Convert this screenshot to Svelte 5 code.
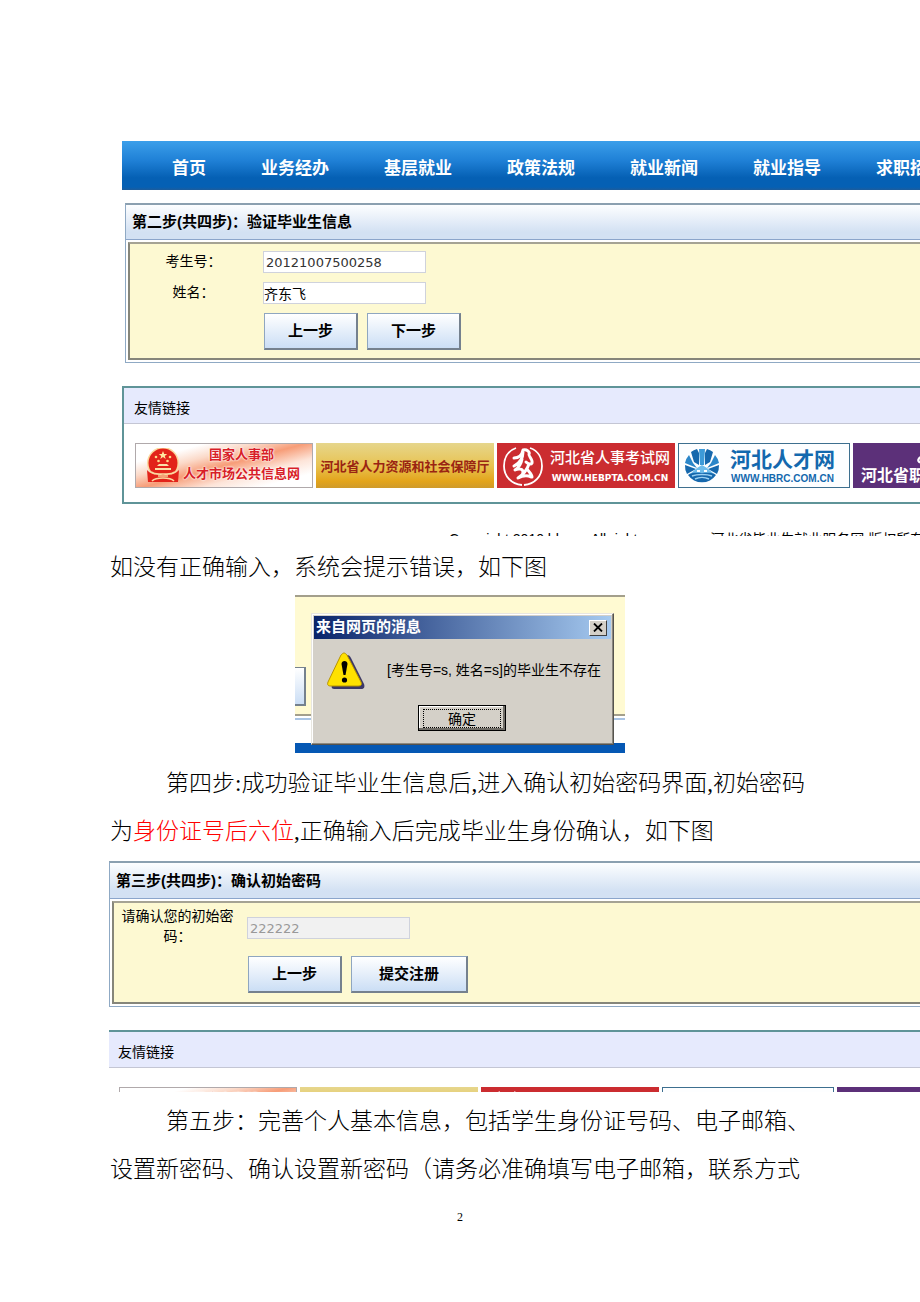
<script>
  const navItems = ['首页', '业务经办', '基层就业', '政策法规', '就业新闻', '就业指导', '求职招聘'];
</script>

{#snippet friendLinks()}
  <section class="links">
    <h2>友情链接</h2>
    <div class="banners">
      <a class="banner market" href="#market">
        <svg class="emblem" viewBox="0 0 34 36" aria-hidden="true">
          <circle cx="17" cy="15" r="16" fill="#fbd9a0" />
          <circle cx="17" cy="15" r="14.500" fill="#e2231a" />
          <path d="M17 3l1.200 3h3l-2.400 1.900.9 3L17 9.100l-2.700 1.800.9-3L12.800 6h3z" fill="#ffe7a0" />
          <g fill="#ffd98a">
            <circle cx="10" cy="9" r="1.300" /><circle cx="24" cy="9" r="1.300" />
            <circle cx="12.500" cy="13" r="1.300" /><circle cx="21.500" cy="13" r="1.300" />
          </g>
          <path d="M11 18l2-2h8l2 2zM9 20h16v2H9z" fill="#fbe0a8" />
          <path d="M1 22c3 4 9 5 16 5s13-1 16-5l-1 12H2z" fill="#e2231a" />
          <path d="M5 24c4 3 8 2 12 2s8 1 12-2M6 33c3-3 7-3 11-3s8 0 11 3" fill="none" stroke="#fbd9a0" stroke-width="1.600" />
          <path d="M12 28h10" stroke="#fbd9a0" stroke-width="1.400" />
        </svg>
        <span class="stack"><span>国家人事部</span><span>人才市场公共信息网</span></span>
      </a>
      <a class="banner bureau" href="#bureau">河北省人力资源和社会保障厅</a>
      <a class="banner exam" href="#exam">
        <svg class="seal" viewBox="0 0 42 42" aria-hidden="true">
          <path d="M14 3C5 6 2 14 2 21c0 10 7 18 18 19M28 3c9 3 12 11 12 18 0 10-7 18-18 19" fill="none" stroke="#fff" stroke-width="1.800" />
          <path d="M12 13c5 0 8-3 9-8 4-1 7 2 6 4-1 2 4 5 3 9-1 2-4 1-6-1M21 7c0 6-3 11-9 14M20 14c-1 6-4 9-7 11 4-2 8-1 8 2s-3 6-5 6M27 19c-2 6-5 10-11 14 4-2 9-3 13-1M25 24c2 3 5 5 5 8" fill="none" stroke="#fff" stroke-width="3" stroke-linecap="round" stroke-linejoin="round" />
        </svg>
        <span class="stack"><span>河北省人事考试网</span><small>WWW.HEBPTA.COM.CN</small></span>
      </a>
      <a class="banner talent" href="#talent">
        <svg class="globe" viewBox="0 0 36 36" aria-hidden="true">
          <path d="M13 1a17 17 0 0 0-6 3l3 10 5 3V5zM23 1a17 17 0 0 1 6 3l-3 10-5 3V5z" fill="#1668ad" />
          <path d="M15 1h6l-1 16h-4z" fill="#3d9ad8" />
          <path d="M5 7a17 17 0 0 0-4 8l12 5-4-5zM31 7a17 17 0 0 1 4 8l-12 5 4-5z" fill="#2b86c9" />
          <path d="M1 17l11 4-9 5a17 17 0 0 1-2-9zM35 17l-11 4 9 5a17 17 0 0 0 2-9z" fill="#1668ad" />
          <path d="M13 20l5-3 5 3 7 6H6z" fill="#6fbdec" />
          <path d="M4 27c4-3 9-2 14-2s10-1 14 2a17 17 0 0 1-28 0z" fill="#1668ad" />
          <path d="M8 28c5-2 15-2 20 0M11 31c4-2 10-2 14 0" fill="none" stroke="#9bd0f2" stroke-width="1.400" />
          <path d="M13 23h3M20 23h3" stroke="#fff" stroke-width="2" />
        </svg>
        <span class="stack"><span>河北人才网</span><small>WWW.HBRC.COM.CN</small></span>
      </a>
      <a class="banner vocational" href="#vocational">
        <svg class="swash" viewBox="0 0 40 16" aria-hidden="true">
          <path d="M8 4C4 5 2 8 4 10c3 2 8-1 12-5s12-4 18-1" fill="none" stroke="#fff" stroke-width="2.500" />
        </svg>
        <span>河北省职业技能</span>
      </a>
    </div>
  </section>
{/snippet}

<main>
  <figure class="shot first">
    <nav>
      {#each navItems as item}
        <a href="#{item}">{item}</a>
      {/each}
    </nav>
    <form class="panel" onsubmit={(e) => e.preventDefault()}>
      <h2>第二步(共四步)：验证毕业生信息</h2>
      <div class="fields">
        <div class="row">
          <label for="exam-no">考生号：</label>
          <input id="exam-no" type="text" value="20121007500258" />
        </div>
        <div class="row">
          <label for="full-name">姓名：</label>
          <input id="full-name" class="cjk" type="text" value="齐东飞" />
        </div>
        <div class="actions">
          <button type="button">上一步</button>
          <button type="submit">下一步</button>
        </div>
      </div>
    </form>
    {@render friendLinks()}
    <div class="copyright">
      <span>Copyright 2010 hbxsw All rights</span>
      <span>河北省毕业生就业服务网 版权所有</span>
    </div>
  </figure>

  <p>如没有正确输入，系统会提示错误，如下图</p>

  <figure class="shot alert">
    <div class="sheet"><i></i></div>
    <div class="floor"></div>
    <div class="dialog" role="alertdialog" aria-labelledby="dlg-title" aria-describedby="dlg-text">
      <header>
        <strong id="dlg-title">来自网页的消息</strong>
        <button class="close" type="button" aria-label="关闭">
          <svg viewBox="0 0 10 9" aria-hidden="true"><path d="M1 .5l8 8M9 .5l-8 8" stroke="#000" stroke-width="1.800" /></svg>
        </button>
      </header>
      <div class="message">
        <svg viewBox="0 0 38 38" aria-hidden="true">
          <path d="M20 3c2 0 3 1 4 3l13 26c1 3 0 5-3 5H8c-3 0-4-1-3-4L17 5z" fill="#3b3766" />
          <path d="M17 1c1 0 2 1 3 2l14 27c1 3 0 4-3 4H4c-3 0-4-1-3-4L14 3c1-1 2-2 3-2z" fill="#ffe100" stroke="#b89400" />
          <path d="M14.500 12c0-4 6-4 6 0l-2 11h-2z" fill="#000" />
          <circle cx="17.500" cy="28" r="2.600" fill="#000" />
        </svg>
        <span id="dlg-text">[考生号=s, 姓名=s]的毕业生不存在</span>
      </div>
      <button class="ok" type="button"><span>确定</span></button>
    </div>
  </figure>

  <p class="indent">第四步:成功验证毕业生信息后,进入确认初始密码界面,初始密码<br />为<em>身份证号后六位</em>,正确输入后完成毕业生身份确认，如下图</p>

  <figure class="shot third">
    <form class="panel" onsubmit={(e) => e.preventDefault()}>
      <h2>第三步(共四步)：确认初始密码</h2>
      <div class="fields">
        <div class="row">
          <label for="first-pass">请确认您的初始密码：</label>
          <input id="first-pass" type="text" value="222222" disabled />
        </div>
        <div class="actions">
          <button type="button">上一步</button>
          <button class="wide" type="submit">提交注册</button>
        </div>
      </div>
    </form>
    {@render friendLinks()}
  </figure>

  <p class="indent">第五步：完善个人基本信息，包括学生身份证号码、电子邮箱、<br />设置新密码、确认设置新密码（请务必准确填写电子邮箱，联系方式</p>

  <footer>2</footer>
</main>

<style>
  :global(body) {
    background: #fff;
  }
  main {
    padding: 141px 0 76px 110px;
    overflow: hidden;
    color: #000;
    font-family: "Liberation Serif", "Noto Sans CJK SC", serif;
  }
  main :global(*) {
    box-sizing: border-box;
  }
  a {
    color: inherit;
    text-decoration: none;
    white-space: nowrap;
  }
  p {
    margin: 0;
    font-size: 23px;
    line-height: 48px;
    font-weight: 300;
    white-space: nowrap;
  }
  p.indent {
    text-indent: 56px;
  }
  em {
    color: #f00;
    font-style: normal;
  }
  .shot {
    overflow: hidden;
    font-family: "Liberation Sans", "Noto Sans CJK SC", sans-serif;
    font-size: 14px;
  }
  .first {
    height: 395px;
    margin: 0 0 8px 12px;
  }
  nav {
    display: flex;
    gap: 55px;
    height: 49px;
    padding: 2px 0 0 50px;
    line-height: 51px;
    color: #fff;
    font-size: 17px;
    font-weight: 700;
    background: linear-gradient(#3b9fea, #1f80d6 40%, #0560b4 75%, #0560b4 94%, #1d5c9c);
  }

  /* framed form */
  .panel {
    border: 1px solid #8fa9c4;
    border-top: 2px solid #8ba0b0;
    border-right: 0;
  }
  .first .panel {
    margin: 13px 0 0 3px;
  }
  h2 {
    margin: 0;
    font-size: 15px;
  }
  .panel h2 {
    height: 35px;
    padding-left: 6px;
    line-height: 34px;
    border-bottom: 1px solid #8ba5cb;
    background: linear-gradient(#fdfeff, #d3e1f3 80%);
  }
  .fields {
    display: flex;
    flex-direction: column;
    gap: 9px;
    margin: 2px 0 2px 2px;
    padding: 7px 0 8px 7px;
    border: 2px solid #86867a;
    border-top-color: #a5a394;
    border-right: 0;
    background: #fdf9d2;
  }
  .row {
    display: flex;
    align-items: flex-start;
    gap: 13px;
  }
  label {
    width: 113px;
    line-height: 20px;
    text-align: center;
  }
  input {
    width: 163px;
    height: 22px;
    padding: 0 2px;
    border: 1px solid #cfd2dc;
    background: #fff;
    color: #333;
    font: 13px "DejaVu Sans", sans-serif;
  }
  input.cjk {
    padding-left: 0;
    color: #000;
    font: 14px "Noto Sans CJK SC", sans-serif;
  }
  input:disabled {
    background: #f1f1f1;
    color: #999;
  }
  .actions {
    display: flex;
    gap: 9px;
    padding-left: 127px;
  }
  .actions button {
    width: 94px;
    height: 37px;
    padding: 0 0 4px;
    border: solid #75818e;
    border-width: 1px 2px 2px 1px;
    border-top-color: #8fa6c0;
    border-left-color: #8fa6c0;
    background: linear-gradient(#fff, #cbdef5);
    color: #000;
    font: 700 15px "Noto Sans CJK SC", sans-serif;
  }
  .actions .wide {
    width: 117px;
  }

  /* friendly links */
  .links {
    margin-top: 23px;
    border: 2px solid #5f9498;
    border-right: 0;
  }
  .links h2 {
    height: 36px;
    padding-left: 10px;
    line-height: 41px;
    font-size: 14px;
    font-weight: 400;
    border-bottom: 1px solid #c4c6d4;
    background: #e6eafd;
  }
  .banners {
    display: flex;
    gap: 3px;
    padding: 19px 0 14px 11px;
  }
  .banner {
    flex: none;
    display: flex;
    align-items: center;
    width: 178px;
    height: 45px;
    overflow: hidden;
    font-weight: 700;
  }
  .stack {
    display: flex;
    flex-direction: column;
    align-items: center;
  }
  .market {
    padding-left: 10px;
    gap: 3px;
    border: 1px solid #b0a9ab;
    color: #d81e28;
    font-size: 13px;
    line-height: 19px;
    text-shadow: 0 0 2px #fff, 0 0 2px #fff;
    background: linear-gradient(165deg, #fff 0 20%, #fbd9c8 35%, #f79d78 50%, #fde4d8 68%, #fff 85%);
  }
  .market .stack {
    padding-bottom: 3px;
  }
  .emblem {
    width: 34px;
    height: 36px;
  }
  .bureau {
    justify-content: center;
    color: #9a2412;
    font-size: 13px;
    background: linear-gradient(#e6d68c, #e8c352 50%, #e3a41b 85%, #cf9a2a);
  }
  .exam {
    padding-left: 5px;
    gap: 6px;
    color: #fff;
    font-size: 15px;
    line-height: 22px;
    background: #cb2c30;
  }
  .exam .stack {
    padding-top: 3px;
    font-weight: 500;
  }
  .seal {
    width: 42px;
    height: 42px;
  }
  small {
    font-size: 9px;
    line-height: 18px;
    font-family: "DejaVu Sans", sans-serif;
    font-weight: 700;
  }
  .talent {
    width: 172px;
    padding-left: 5px;
    gap: 10px;
    border: 1px solid #3d6f8f;
    color: #1368ae;
    font-size: 21px;
    line-height: 23px;
    background: #fdfeff;
  }
  .talent .stack {
    padding-top: 3px;
  }
  .talent small {
    font: 700 10px/15px "Liberation Sans", sans-serif;
  }
  .globe {
    width: 36px;
    height: 36px;
  }
  .vocational {
    flex-direction: column;
    align-items: flex-start;
    padding: 10px 0 0 8px;
    color: #fff;
    font-size: 16px;
    line-height: 18px;
    background: #5c3079;
  }
  .swash {
    width: 40px;
    height: 14px;
    margin-left: 52px;
  }

  .copyright {
    display: flex;
    gap: 66px;
    height: 7px;
    margin-top: 25px;
    padding-left: 327px;
    overflow: hidden;
    line-height: 21px;
    white-space: nowrap;
  }

  /* message box over a page fragment */
  .alert {
    position: relative;
    width: 330px;
    margin: 3px 0 7px 185px;
  }
  .sheet {
    display: flex;
    align-items: flex-end;
    height: 121px;
    padding-bottom: 8px;
    border: solid #a39f8c;
    border-width: 2px 0;
    background: #fffad2;
  }
  .sheet i {
    width: 11px;
    height: 39px;
    border: solid #75818e;
    border-width: 1px 2px 2px 0;
    background: linear-gradient(#fff, #cbdef5);
  }
  .floor {
    height: 37px;
    border-bottom: 10px solid #0558b4;
    background: linear-gradient(#fff 0 2px, #a9c4e4 2px 4px, #fff 4px);
  }
  .dialog {
    position: absolute;
    top: 18px;
    left: 16px;
    width: 303px;
    height: 132px;
    padding: 1px;
    border: 1px solid #e8e6e0;
    border-right-color: #55534e;
    border-bottom-color: #55534e;
    box-shadow: inset -1px -1px #8b8880, inset 1px 1px #fff;
    background: #d4d0c8;
  }
  .dialog header {
    display: flex;
    justify-content: space-between;
    align-items: center;
    height: 23px;
    margin: 1px;
    padding: 0 4px 0 2px;
    color: #fff;
    font-size: 15px;
    line-height: 20px;
    background: linear-gradient(90deg, #0a246a, #a6caf0);
  }
  .dialog strong {
    padding-bottom: 2px;
  }
  .close {
    display: grid;
    place-items: center;
    width: 18px;
    height: 16px;
    padding: 0;
    border: 1px solid #fff;
    border-right-color: #404040;
    border-bottom-color: #404040;
    background: #d4d0c8;
  }
  .close svg {
    width: 10px;
    height: 9px;
  }
  .message {
    display: flex;
    align-items: center;
    gap: 22px;
    padding: 12px 0 0 14px;
    white-space: nowrap;
  }
  .message span {
    padding-bottom: 5px;
  }
  .message svg {
    width: 38px;
    height: 38px;
  }
  .ok {
    display: block;
    width: 88px;
    height: 26px;
    margin: 15px 0 0 105px;
    padding: 2px;
    border: 1px solid #000;
    box-shadow: inset -2px -2px #6f6c66, inset 1px 1px #fff;
    background: #d4d0c8;
    color: #000;
    font: 14px/16px "Noto Sans CJK SC", sans-serif;
  }
  .ok span {
    display: block;
    height: 19px;
    margin: 0 2px;
    border: 1px dotted #000;
  }

  .third {
    height: 231px;
    margin: 5px 0 6px -1px;
  }
  .third .panel h2 {
    height: 36px;
    line-height: 36px;
  }
  .third .fields {
    padding: 3px 0 9px 7px;
    gap: 10px;
  }
  .third .row input {
    margin-top: 11px;
  }
  .third .links {
    margin-left: -3px;
  }

  footer {
    padding-right: 110px;
    margin-top: 14px;
    font-size: 12px;
    line-height: 18px;
    text-align: center;
  }
</style>
